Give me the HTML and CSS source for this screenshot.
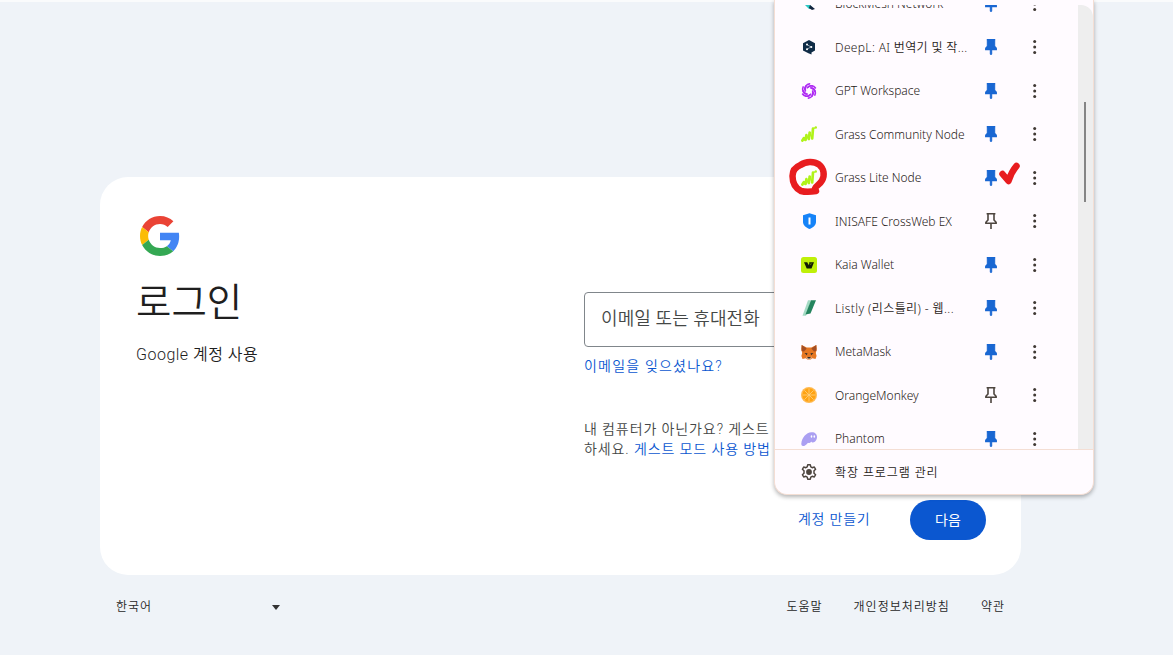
FILE: index.html
```
<!DOCTYPE html>
<html lang="ko">
<head>
    <meta charset="utf-8">
    <title>로그인 - Google 계정</title>
    <link rel="stylesheet" href="styles.css">
</head>
<body>
    <svg width="0" height="0" class="defs">
        <symbol id="pin" viewBox="0 0 12 16">
            <path d="M2 0h8v1L9.900 2v5l2 2.300V11H6.900v4.200L6 16l-.9-.8V11H.1V9.300L2.100 7V2L2 1z" fill="#1967d2" stroke="#1967d2" stroke-width=".5"/>
        </symbol>
        <symbol id="pin-off" viewBox="0 0 12 16">
            <path d="M1.600.8h8.800M3 1v6L.9 9.300v1h10.200v-1L9 7V1M6 10.300V16" fill="none" stroke="#4d453f" stroke-width="1.600"/>
        </symbol>
        <symbol id="dots" viewBox="0 0 4 16">
            <g fill="#3f3833"><circle cx="1.700" cy="2.600" r="1.500"/><circle cx="1.700" cy="8" r="1.500"/><circle cx="1.700" cy="13.400" r="1.500"/></g>
        </symbol>
        <symbol id="grass" viewBox="0 0 16 16">
            <path d="M1.400 14.500l1.400-2.300M4.500 14l.9-4.800M7.800 13l.9-6.500M11.200 12.500l.8-10" fill="none" stroke="#b0f31a" stroke-width="2.700" stroke-linecap="round"/>
            <path d="M3 12.500l1.500 1.700M5.500 9.500l2.200 4M8.800 7l2.400 5.500M12 3l1.600-1" fill="none" stroke="#b0f31a" stroke-width="1.400" stroke-linecap="round"/>
            <circle cx="14.800" cy="1.500" r="1.200" fill="#b0f31a"/>
        </symbol>
    </svg>

    <main class="card">
        <section class="intro">
            <svg class="logo" viewBox="0 0 48 48">
                <path fill="#ea4335" d="M24 9.5c3.54 0 6.71 1.22 9.21 3.6l6.85-6.85C35.9 2.38 30.47 0 24 0 14.62 0 6.51 5.38 2.56 13.22l7.98 6.19C12.43 13.72 17.74 9.5 24 9.5z"/>
                <path fill="#4285f4" d="M46.98 24.55c0-1.57-.15-3.09-.38-4.55H24v9.02h12.94c-.58 2.96-2.26 5.48-4.78 7.18l7.73 6c4.51-4.18 7.09-10.36 7.09-17.65z"/>
                <path fill="#fbbc05" d="M10.53 28.59c-.48-1.45-.76-2.99-.76-4.59s.27-3.14.76-4.59l-7.98-6.19C.92 16.46 0 20.12 0 24c0 3.88.92 7.54 2.56 10.78l7.97-6.19z"/>
                <path fill="#34a853" d="M24 48c6.48 0 11.93-2.13 15.89-5.81l-7.73-6c-2.15 1.45-4.92 2.3-8.16 2.3-6.26 0-11.57-4.22-13.47-9.91l-7.98 6.19C6.51 42.62 14.62 48 24 48z"/>
            </svg>
            <h1>로그인</h1>
            <p>Google 계정 사용</p>
        </section>
        <section class="login">
            <div class="field">이메일 또는 휴대전화</div>
            <a class="forgot">이메일을 잊으셨나요?</a>
            <p class="guest">내 컴퓨터가 아닌가요? 게스트 모<br>하세요. <a>게스트 모드 사용 방법</a></p>
            <div class="actions">
                <a>계정 만들기</a>
                <button>다음</button>
            </div>
        </section>
    </main>

    <footer>
        <div class="language"><span>한국어</span><i class="arrow"></i></div>
        <nav><a>도움말</a><a>개인정보처리방침</a><a>약관</a></nav>
    </footer>

    <div class="menu">
        <div class="scroll">
            <div class="list">
                <div class="row">
                    <svg class="icon" viewBox="0 0 16 16"><path d="M3 8h5l5 5H8z" fill="#2cc9c4"/><path d="M9 9l5 4-3 1-3-2z" fill="#14243f"/></svg>
                    <span class="name">BlockMesh Network</span>
                    <svg class="pin"><use href="#pin"/></svg><svg class="dots"><use href="#dots"/></svg>
                </div>
                <div class="row">
                    <svg class="icon" viewBox="0 0 16 16"><path d="M8 1l6 3.300v7.200L10.500 13.500v2L8 14.500l-6-3V4.300z" fill="#0f2b46"/><path d="M6 5.700l4 2.200-4 2.300" fill="none" stroke="#a9bac7" stroke-width=".8"/><g fill="#fff"><circle cx="6" cy="5.600" r="1"/><circle cx="10.300" cy="7.900" r="1"/><circle cx="6" cy="10.300" r="1"/></g></svg>
                    <span class="name deepl">DeepL: AI 번역기 및 작...</span>
                    <svg class="pin"><use href="#pin"/></svg><svg class="dots"><use href="#dots"/></svg>
                </div>
                <div class="row">
                    <svg class="icon" viewBox="0 0 16 16">
                        <defs><path id="petal" d="M4.300 6.500C3.600 4 5.300 1.200 8.600.9M6.200 4.900C7.200 3.200 9.200 2.500 11.200 3" fill="none" stroke="#ae2bf3" stroke-width="1.600" stroke-linecap="round"/></defs>
                        <use href="#petal"/><use href="#petal" transform="rotate(60 8 8)"/><use href="#petal" transform="rotate(120 8 8)"/><use href="#petal" transform="rotate(180 8 8)"/><use href="#petal" transform="rotate(240 8 8)"/><use href="#petal" transform="rotate(300 8 8)"/>
                    </svg>
                    <span class="name">GPT Workspace</span>
                    <svg class="pin"><use href="#pin"/></svg><svg class="dots"><use href="#dots"/></svg>
                </div>
                <div class="row">
                    <svg class="icon"><use href="#grass"/></svg>
                    <span class="name">Grass Community Node</span>
                    <svg class="pin"><use href="#pin"/></svg><svg class="dots"><use href="#dots"/></svg>
                </div>
                <div class="row">
                    <svg class="icon"><use href="#grass"/></svg>
                    <span class="name">Grass Lite Node</span>
                    <svg class="pin"><use href="#pin"/></svg><svg class="dots"><use href="#dots"/></svg>
                    <svg class="marks" viewBox="0 0 236 44">
                        <path d="M12.500 9C18 5 26 5 31 8.500c5 4 6 11 3 16-2 4-6 5-7 8l1 2.500c-6 1-11 1-15 0-6-3-8.500-9-8.500-15 0-5 3-9 8-11z" fill="none" stroke="#e81c1f" stroke-width="6.500" stroke-linejoin="round"/>
                        <path d="M214.500 18l6 7c2-6 4.500-11 8-15" fill="none" stroke="#e81c1f" stroke-width="6.500" stroke-linecap="round" stroke-linejoin="round"/>
                    </svg>
                </div>
                <div class="row">
                    <svg class="icon" viewBox="0 0 16 16"><path d="M8.500.2l6.500 2v6.500c0 3.500-3 6-6.500 7.200C5 14.700 2 12.200 2 8.700V2.200z" fill="#1683f8"/><path d="M8.500 4.500v7" stroke="#fff" stroke-width="2"/></svg>
                    <span class="name">INISAFE CrossWeb EX</span>
                    <svg class="pin"><use href="#pin-off"/></svg><svg class="dots"><use href="#dots"/></svg>
                </div>
                <div class="row">
                    <svg class="icon" viewBox="0 0 16 16"><rect width="16" height="16" rx="2.500" fill="#bff009"/><path d="M3 5.200h3.300l1.300 3 .7-3H13l-2.500 6.300H5.700z" fill="#111b04"/><path d="M8.500 6l1 2 1-2" fill="none" stroke="#668600" stroke-width=".6"/></svg>
                    <span class="name">Kaia Wallet</span>
                    <svg class="pin"><use href="#pin"/></svg><svg class="dots"><use href="#dots"/></svg>
                </div>
                <div class="row">
                    <svg class="icon" viewBox="0 0 16 16"><path d="M7 .3h3L5 15.800H1.500z" fill="#a4dbc4"/><path d="M10 .3h5L9.500 13.500l-5 1z" fill="#24845e"/></svg>
                    <span class="name listly">Listly (리스틀리) - 웹...</span>
                    <svg class="pin"><use href="#pin"/></svg><svg class="dots"><use href="#dots"/></svg>
                </div>
                <div class="row">
                    <svg class="icon" viewBox="0 0 16 16"><path d="M.7 1l5 2.500h4.600l5-2.500.5 4-1 4 .8 3-1.100 3-3.200-.8L9.700 15.500H6.300L4.700 14.200 1.500 15 .4 12l.8-3-1-4z" fill="#e67722"/><path d="M.7 1l5 3.500L3 7.500.6 7zM15.300 1l-5 3.500 2.700 3 2.400-.5z" fill="#a34e25"/><path d="M3.500 9l3 .3-.7 2zM12.500 9l-3 .3.700 2z" fill="#35302b"/><path d="M5 12l1.500 2h3L11 12l-1 3H6z" fill="#e5c8ae"/><path d="M6.600 13h2.800v1.500H6.600z" fill="#332b2b"/></svg>
                    <span class="name">MetaMask</span>
                    <svg class="pin"><use href="#pin"/></svg><svg class="dots"><use href="#dots"/></svg>
                </div>
                <div class="row">
                    <svg class="icon" viewBox="0 0 16 16"><circle cx="8" cy="8" r="8" fill="#ffba53"/><circle cx="8" cy="8" r="6.700" fill="#ffa313"/><path d="M8 1.500v13M1.500 8h13M3.400 3.400l9.200 9.200M12.600 3.400l-9.200 9.200" stroke="#ffd184" stroke-width=".8"/></svg>
                    <span class="name">OrangeMonkey</span>
                    <svg class="pin"><use href="#pin-off"/></svg><svg class="dots"><use href="#dots"/></svg>
                </div>
                <div class="row">
                    <svg class="icon" viewBox="0 0 16 16"><path d="M.3 12.500C1 6.500 5 1.700 10.500 1.300c3.500-.2 5.500 2 5.500 4.700 0 3-2 5.400-4 5.400-1 0-1.400-.4-1.600-1-1 1.300-2.200 1.800-3.400 1.300-1.800 2.500-3.500 3.300-5 3.300C.8 15 .2 14 .3 12.500z" fill="#ab9ff2"/><ellipse cx="10.500" cy="5.500" rx=".8" ry="1.200" fill="#fff"/><ellipse cx="13.300" cy="5.500" rx=".8" ry="1.200" fill="#fff"/></svg>
                    <span class="name">Phantom</span>
                    <svg class="pin"><use href="#pin"/></svg><svg class="dots"><use href="#dots"/></svg>
                </div>
            </div>
            <div class="track"><div class="thumb"></div></div>
        </div>
        <div class="manage">
            <svg class="icon" viewBox="0 0 16 16"><path d="M6.700.8h2.600l.5 2.100 1.400.8 2.100-.7 1.300 2.300-1.600 1.500v2.400l1.600 1.500-1.300 2.300-2.100-.7-1.400.8-.5 2.100H6.700l-.5-2.100-1.400-.8-2.100.7-1.300-2.300L3 9.200V6.800L1.400 5.300 2.700 3l2.100.7 1.400-.8z" fill="none" stroke="#4d453f" stroke-width="1.500" stroke-linejoin="round"/><circle cx="8" cy="8" r="2.900" fill="#4d453f"/></svg>
            <span class="name">확장 프로그램 관리</span>
        </div>
    </div>
</body>
</html>
```
FILE: styles.css
```
* {
    box-sizing: border-box;
}
body {
    margin: 0;
    height: 655px;
    padding: 174.5px 152px 0 100px;
    overflow: hidden;
    background: #eff3f8;
    border-top: 2px solid #fafbfc;
    font-family: Roboto, "Noto Sans CJK KR", sans-serif;
    font-weight: 350;
    color: #1f1f1f;
}
h1, p {
    margin: 0;
    font-weight: 350;
}
a {
    color: #0b57d0;
}
.defs {
    display: block;
    height: 0;
}
.card {
    display: flex;
    height: 398.5px;
    padding: 36.5px 35px 36px 36px;
    background: #fff;
    border-radius: 28px;
}
.intro {
    width: 448px;
}
.logo {
    display: block;
    width: 40px;
    height: 40px;
    margin: 3px 0 0 4px;
}
h1 {
    margin-top: 22px;
    font-size: 38.5px;
    line-height: 50px;
}
.intro p {
    margin-top: 15px;
    font-size: 16px;
    line-height: 24px;
    letter-spacing: .5px;
}
.login {
    flex: 1;
    padding-top: 78.5px;
    font-size: 14px;
    line-height: 20px;
}
.field {
    height: 55px;
    padding: 0 16px;
    border: 1px solid #80868b;
    border-radius: 4px;
    font-size: 18px;
    line-height: 51px;
    letter-spacing: .1px;
    color: #444746;
    white-space: nowrap;
}
.forgot {
    display: block;
    margin-top: 9px;
    letter-spacing: 1.2px;
}
.guest {
    margin-top: 43.5px;
    color: #444746;
    letter-spacing: .9px;
    white-space: nowrap;
}
.actions {
    display: flex;
    justify-content: flex-end;
    align-items: center;
    gap: 39.5px;
    margin-top: 41px;
}
.actions a {
    letter-spacing: .8px;
    padding-bottom: 2px;
}
button {
    width: 76px;
    height: 40px;
    padding-bottom: 3px;
    border: 0;
    border-radius: 20px;
    background: #0b57d0;
    color: #fff;
    font: 400 14px "Noto Sans CJK KR", sans-serif;
}
footer {
    display: flex;
    justify-content: space-between;
    padding: 23px 16px 0;
    font-size: 12px;
    line-height: 18px;
    letter-spacing: 1px;
}
footer a {
    color: #1f1f1f;
}
footer nav {
    display: flex;
    gap: 31px;
}
.language {
    display: flex;
    justify-content: space-between;
    align-items: center;
    width: 164px;
}
.arrow {
    border: 4px solid transparent;
    border-top: 5px solid #333;
    border-bottom: 0;
}

/* extensions popup */
.menu {
    position: absolute;
    top: 0;
    left: 774px;
    width: 320px;
    height: 495px;
    padding-top: 5px;
    overflow: hidden;
    background: #fffbff;
    border: 1px solid #f4ded4;
    border-top: 0;
    border-radius: 0 0 13px 13px;
    box-shadow: 0 2px 4px rgba(0,0,0,0.3);
}
.scroll {
    display: flex;
    height: 444px;
    overflow: hidden;
}
.list {
    flex: 1;
    margin-top: -23.2px;
}
.row {
    position: relative;
    display: flex;
    align-items: center;
    height: 43.53px;
    padding-left: 26px;
}
.icon {
    flex: none;
    width: 16px;
    height: 16px;
    margin-right: 18px;
}
.name {
    width: 150px;
    font-family: "Noto Sans", "Noto Sans CJK KR", sans-serif;
    font-size: 12px;
    font-weight: 350;
    color: #1f1a17;
    white-space: nowrap;
}
.deepl {
    letter-spacing: .35px;
}
.listly {
    letter-spacing: .4px;
}
.pin {
    width: 12px;
    height: 16px;
}
.dots {
    width: 4px;
    height: 16px;
    margin-left: 36px;
}
.marks {
    position: absolute;
    top: 0;
    left: 13px;
    width: 236px;
    height: 44px;
}
.track {
    width: 15px;
    padding: 97px 0 0 6px;
    background: #eee;
    border-top-right-radius: 12px;
}
.thumb {
    width: 2px;
    height: 100px;
    background: #858585;
}
.manage {
    display: flex;
    align-items: center;
    height: 45px;
    padding-left: 26px;
    border-top: 1px solid #f4ded4;
}
.manage .name {
    letter-spacing: .9px;
}
```
